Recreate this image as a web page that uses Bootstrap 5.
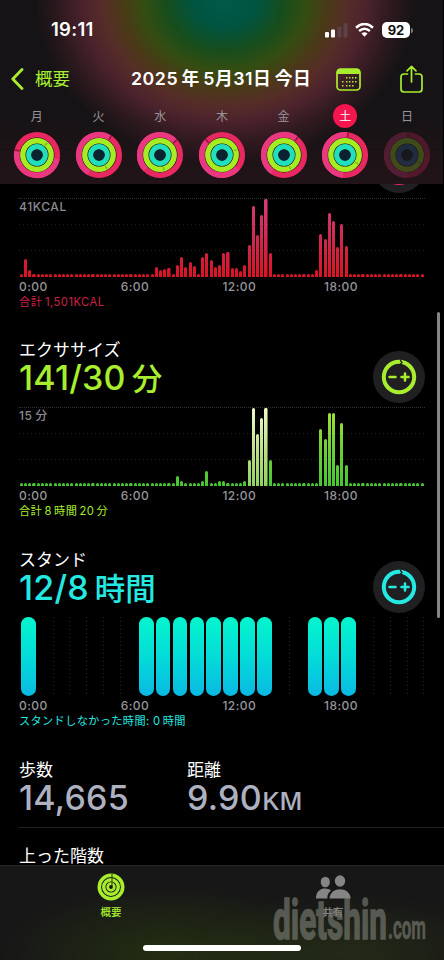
<!DOCTYPE html>
<html lang="ja">
<head>
<meta charset="utf-8">
<meta name="viewport" content="width=device-width, initial-scale=1">
<title>アクティビティ概要</title>
<link href="https://cdn.jsdelivr.net/npm/bootstrap@5.3.0/dist/css/bootstrap.min.css" rel="stylesheet">
<style>
body{background:#000;color:#fff;font-family:Inter,"Noto Sans CJK JP",sans-serif;width:444px;height:960px;white-space:nowrap}
svg{display:block}
.lime{color:#a8ee2e}.cyan{color:#24e9e2}.red{color:#d02048}
.top-area{height:184px;width:443px;background:
 linear-gradient(180deg,rgba(70,20,38,0) 60%,rgba(70,22,36,.26) 100%),
 radial-gradient(ellipse 190px 164px at 225px 0,#005a4a 0%,#005440 17%,#174d1c 31%,#344d12 43%,#4a3a17 54%,#562c29 65%,#4a222c 75%,#2c191e 88%,#151315 100%)}
.status-row{height:60px;padding:0 30px 0 51px}
.clock{font-size:18.5px;font-weight:600;letter-spacing:.3px}
.batt{width:28px;height:16px;border-radius:5px;background:#fff;color:#111;font-size:13px;font-weight:700;line-height:16px}
.nub{width:2px;height:5px;background:#777;border-radius:0 2px 2px 0;margin-left:1px}
.nav-row{height:38px;padding:0 20px 0 11px}
.back{font-size:17.500px;gap:11px}
.date{font-size:17.800px;font-weight:600;margin-left:61px;letter-spacing:.5px}
.week{padding:6px 6px 0 6px}
.day{width:61.7px;flex:none;font-size:12px;color:#98949a}
.day-name{width:24px;height:24px;line-height:25px;text-align:center;border-radius:50%}
.today{background:#f4144e;color:#fff}
.rings{margin-top:3px}
.scroll-area{height:681px}
.metric{padding-left:19px;padding-right:19px}
.first{height:134px}
.plot{height:79px;position:relative}
.lines{border-top:1px dotted #303030;background:
 repeating-linear-gradient(90deg,#1e1e1e 0 1px,transparent 1px 4px) 0 25px/100% 1px no-repeat,
 repeating-linear-gradient(90deg,#1e1e1e 0 1px,transparent 1px 4px) 0 51px/100% 1px no-repeat}
.bars{height:78px;padding:0 1px 0 .2px}
.slot{width:4.225px;flex:none}
.bar{width:3.1px;border-radius:1.5px 1.5px 0 0;background-position:bottom;background-size:100% 78px}
.bars-red .bar{background-image:linear-gradient(#d83c7c,#d02850 50%,#dc1322)}
.bars-green .bar{background-image:linear-gradient(#a5e636,#6fd035 50%,#45c831)}
.bars-green .bar.pale{background-image:linear-gradient(#effcc9,#b8dc83 60%,#8ed45f)}
.peak{position:absolute;left:0;top:1px;font-size:12px;font-weight:500;color:#8b8b91;line-height:14px;letter-spacing:.6px}
.axis{height:21px;line-height:20px;font-size:12px;font-weight:500;color:#96969b;letter-spacing:.45px}
.axis span{width:101.7px;flex:none}
.total{height:10px;line-height:9px;font-size:11.2px;letter-spacing:.35px}
.label{height:24px;line-height:24px;font-size:17px}
.value{height:32px;line-height:32px;font-size:34px;font-weight:500;letter-spacing:.2px}
.unit{font-size:30.500px;letter-spacing:0;margin-left:6px}
.head{height:69px}
.round-btn{width:52px;height:52px;border-radius:50%;background:#202022;flex:none}
.stand{padding-left:.8px}
.hour{width:16.86px;height:79px;flex:none}
.hour.on::before{content:"";display:block;width:14.6px;height:79px;margin:0 auto;border-radius:7.3px;background:linear-gradient(#04f6cd,#04dcd9 50%,#09b9e2)}
.hour.mark-end{background:repeating-linear-gradient(#292929 0 1px,transparent 1px 4px) 100% 0/1px 100% no-repeat}
.steps{height:70px;border-bottom:1px solid #202020;margin-left:18px;padding-left:1px}
.grey-num{color:#aeb1c0;font-size:34px;font-weight:500;line-height:31px;letter-spacing:.25px}
.tabs{height:95px;border-top:1px solid #272727;position:relative;background:
 radial-gradient(ellipse 170px 70px at 170px 88px,rgba(48,70,12,.5),transparent),
 radial-gradient(ellipse 160px 60px at 350px 88px,rgba(48,60,22,.5),transparent),#171717}
.tab{width:50%;padding-top:7px;font-size:10.5px;font-weight:500}
.tab span{margin-top:4px}
.home-bar{position:absolute;left:143px;top:79px;width:158px;height:6px;border-radius:3px;background:#fff}
.stamp{position:absolute;left:264px;top:22px}
.thumb{position:absolute;right:4px;top:312px;width:3px;height:306px;border-radius:2px;background:#858585}
</style>
</head>
<body class="position-relative overflow-hidden">
<header class="top-area">
 <div class="status-row d-flex align-items-center justify-content-between">
  <span class="clock">19:11</span>
  <div class="d-flex align-items-center">
   <svg width="23" height="15" viewBox="0 0 23 15"><rect x="0" y="9" width="4" height="5.500" rx="1" fill="#fff"/><rect x="6" y="6.500" width="4" height="8" rx="1" fill="#fff"/><rect x="12.300" y="3.500" width="4" height="11" rx="1" fill="#5b4248"/><rect x="18.500" y="0" width="4" height="14.500" rx="1" fill="#5b4248"/></svg>
   <svg style="margin-left:7px" width="19" height="14" viewBox="0 0 19 14" fill="none" stroke="#fff"><path d="M1 4.700Q9.500-2.800 18 4.700" stroke-width="2.500"/><path d="M4.100 8Q9.500 3.300 14.900 8" stroke-width="2.400"/><path d="M6.500 10.500Q9.500 8 12.500 10.500L9.500 13.700Z" fill="#fff" stroke="none"/></svg>
   <span class="batt text-center ms-2">92</span><span class="nub"></span>
  </div>
 </div>
 <div class="nav-row d-flex align-items-center">
  <a class="back lime d-flex align-items-center text-decoration-none"><svg width="13" height="22" viewBox="0 0 13 22" fill="none" stroke="currentColor" stroke-width="2.800" stroke-linecap="round" stroke-linejoin="round"><path d="M11 1.500L1.800 11L11 20.500"/></svg>概要</a>
  <span class="date">2025&#8201;年&#8201;5月31日&#8201;今日</span>
  <svg class="lime ms-auto" width="25" height="23" viewBox="0 0 25 23"><rect x="1" y="1" width="23" height="21" rx="3.500" fill="none" stroke="currentColor" stroke-width="1.700"/><path d="M1 6V4Q1 1 4 1H21Q24 1 24 4V6Z" fill="currentColor"/><g fill="currentColor"><path d="M10 9h1.500v1.500h-1.500zM13 9h1.500v1.500h-1.500zM16 9h1.500v1.500h-1.500zM19 9h1.500v1.500h-1.500zM6 13h1.500v1.500H6zM10 13h1.500v1.500h-1.500zM13 13h1.500v1.500h-1.500zM16 13h1.500v1.500h-1.500zM19 13h1.500v1.500h-1.500zM6 17h1.500v1.500H6zM10 17h1.500v1.500h-1.500zM13 17h1.500v1.500h-1.500zM16 17h1.500v1.500h-1.500z"/></g></svg>
  <svg class="lime" style="margin-left:39px" width="23" height="28" viewBox="0 0 23 28" fill="none" stroke="currentColor" stroke-width="1.700" stroke-linecap="round" stroke-linejoin="round"><path d="M7.500 9H4Q1 9 1 12V24Q1 27 4 27H19Q22 27 22 24V12Q22 9 19 9H15.500M11.500 17V1.500M7 5.800L11.500 1.300L16 5.800"/></svg>
 </div>
 <div class="week d-flex" id="week"></div>
</header>

<main class="scroll-area overflow-hidden">
 <section class="metric first d-flex flex-column">
  <div class="d-flex justify-content-end" style="height:14px"><svg class="round-btn" style="margin-top:-43px" width="52" height="52" viewBox="0 0 52 52"><circle cx="26" cy="26" r="15.800" fill="none" stroke="#e8255c" stroke-width="4.400"/></svg></div>
  <div class="plot lines bars-red"><span class="peak">41KCAL</span><div class="bars d-flex align-items-end" id="move"></div></div>
  <div class="axis d-flex"><span>0:00</span><span>6:00</span><span>12:00</span><span>18:00</span></div>
  <div class="total red" style="letter-spacing:.5px">合計&#8201;1,501KCAL</div>
 </section>
 <section class="metric">
  <div class="head d-flex justify-content-between" style="margin-top:20px">
   <div><div class="label">エクササイズ</div><div class="value lime">141/30<span class="unit">分</span></div></div>
   <div class="round-btn lime d-flex align-items-center justify-content-center" style="margin:13px 0 0 0">
    <svg width="36" height="36" viewBox="0 0 36 36" fill="none" stroke="currentColor" stroke-linecap="round"><circle cx="18" cy="18" r="15.200" stroke-width="4"/><path d="M19.500 1.500L21 3.500L19.500 5" stroke="#202022" stroke-width="1.300"/><path d="M8.500 18h6M20.500 18h7M24 14.500v7" stroke-width="2.500"/></svg>
   </div>
  </div>
  <div class="plot lines bars-green"><span class="peak">15&#8201;分</span><div class="bars d-flex align-items-end" id="exercise"></div></div>
  <div class="axis d-flex"><span>0:00</span><span>6:00</span><span>12:00</span><span>18:00</span></div>
  <div class="total lime">合計&#8201;8&#8201;時間&#8201;20&#8201;分</div>
 </section>
 <section class="metric">
  <div class="head d-flex justify-content-between" style="margin-top:31px">
   <div><div class="label">スタンド</div><div class="value cyan">12/8<span class="unit">時間</span></div></div>
   <div class="round-btn cyan d-flex align-items-center justify-content-center" style="margin:13px 0 0 0">
    <svg width="36" height="36" viewBox="0 0 36 36" fill="none" stroke="currentColor" stroke-linecap="round"><circle cx="18" cy="18" r="15.200" stroke-width="4"/><path d="M19.500 1.500L21 3.500L19.500 5" stroke="#202022" stroke-width="1.300"/><path d="M8.500 18h6M20.500 18h7M24 14.500v7" stroke-width="2.500"/></svg>
   </div>
  </div>
  <div class="plot stand d-flex" id="stand"></div>
  <div class="axis d-flex"><span>0:00</span><span>6:00</span><span>12:00</span><span>18:00</span></div>
  <div class="total cyan">スタンドしなかった時間: 0&#8201;時間</div>
 </section>
 <section class="steps d-flex" style="margin-top:31px">
  <div style="width:168px"><div class="label">歩数</div><div class="grey-num">14,665</div></div>
  <div><div class="label">距離</div><div class="grey-num">9.90ᴋᴍ</div></div>
 </section>
 <div class="metric"><div class="label" style="margin-top:16px">上った階数</div></div>
</main>

<nav class="tabs d-flex">
 <div class="tab lime d-flex flex-column align-items-center">
  <svg width="28" height="28" viewBox="0 0 28 28" fill="none" stroke="currentColor"><circle cx="14" cy="14" r="11.700" stroke-width="3.600"/><circle cx="14" cy="14" r="7.300" stroke-width="3.400"/><circle cx="14" cy="14" r="3.300" stroke-width="2.800"/><path d="M15 1v12" stroke="#26350f" stroke-width="1"/></svg>
  <span>概要</span>
 </div>
 <div class="tab d-flex flex-column align-items-center" style="color:#858585">
  <svg width="36" height="28" viewBox="0 0 36 28" fill="currentColor"><ellipse cx="10.300" cy="9" rx="4.600" ry="5.200"/><ellipse cx="25" cy="8" rx="5.200" ry="5.800"/><path d="M1 25.500C1 13.500 13 14.500 16 17.500Q12 20.500 12.300 25.500Z"/><path d="M14.500 25.500C15 13 35 13 35.700 25.500Z"/></svg>
  <span>共有</span>
 </div>
 <svg class="stamp" width="180" height="62" viewBox="0 0 180 62" opacity=".62" fill="#7d7f77" stroke="#7d7f77" font-family="Roboto, sans-serif" font-weight="700"><text x="9" y="50.500" font-size="56" stroke-width="1.600" textLength="114" lengthAdjust="spacingAndGlyphs">dietshin</text><text x="124" y="50.500" font-size="33" stroke-width=".5" textLength="38" lengthAdjust="spacingAndGlyphs">.com</text></svg>
 <div class="home-bar"></div>
</nav>
<div class="thumb"></div>

<script src="https://cdn.jsdelivr.net/npm/bootstrap@5.3.0/dist/js/bootstrap.bundle.min.js"></script>
<script>
// Week strip: overlap angle of each outer ring, in degrees
const days = [['月',280],['火',30],['水',45],['木',310],['金',35],['土',5],['日',0]];
document.getElementById('week').innerHTML = days.map(([name, a], i) => `
 <div class="day d-flex flex-column align-items-center">
  <div class="day-name ${i === 5 ? 'today' : ''}">${name}</div>
  <svg class="rings" width="48" height="48" viewBox="-24 -24 48 48" fill="none" opacity="${i === 6 ? .25 : 1}">
   <circle r="23" fill="#210d15"/>
   <circle r="20.300" stroke="#e82860" stroke-width="5.600"/>
   <path d="M0 -20.300A20.300 20.300 0 0 0 0 20.300" transform="rotate(${i === 6 ? 0 : a})" stroke="#ea3880" stroke-width="5.600"/>
   <path d="M0-18V-22.500" transform="rotate(${a + 3})" stroke="#8e1740" stroke-width="1.500"/>
   <circle r="14.200" stroke="#a6ec22" stroke-width="5.400"/>
   <path d="M0-12.500V-16" transform="rotate(${a + 120})" stroke="#79ad25" stroke-width="1.200"/>
   <circle r="8.300" stroke="${i === 6 ? '#2a78b8' : '#21dfbd'}" stroke-width="5.200"/>
   <circle r="5.600" fill="#0b2230"/>
  </svg>
 </div>`).join('');

// Quarter-hour bars, index: height in px; all other slots hold the minimum
const move = {1:18,2:7.5,32:10,33:7.5,34:8.5,35:9,37:12.5,38:20,39:10.5,40:15,41:11,43:20,44:24,45:17,46:10,47:12.5,48:24,49:25,50:9,51:9,52:6,53:12.5,54:32,55:71,56:42,57:62,58:78,59:24,70:7.5,71:43,72:38,73:64,74:56,75:30,76:53,77:31};
const exercise = {37:10,38:5,43:5,44:15.5,47:5,48:5,53:5,54:26,55:78,56:52,57:68,58:78,59:26,71:57,72:47,73:73,74:73,75:21,76:63,77:21};
function draw(id, data, pale) {
  let out = '';
  for (let i = 0; i < 96; i++)
    out += `<div class="slot d-flex justify-content-center"><div class="bar ${pale.includes(i) ? 'pale' : ''}" style="height:${data[i] || 3}px"></div></div>`;
  document.getElementById(id).innerHTML = out;
}
draw('move', move, []);
draw('exercise', exercise, [54,55,56,57,58]);

const on = [0,7,8,9,10,11,12,13,14,17,18,19];
let hours = '';
for (let i = 0; i < 24; i++) {
  const cls = on.includes(i) ? 'on' : on.includes(i + 1) ? '' : 'mark-end';
  hours += `<div class="hour ${cls}"></div>`;
}
document.getElementById('stand').innerHTML = hours;
</script>
</body>
</html>
